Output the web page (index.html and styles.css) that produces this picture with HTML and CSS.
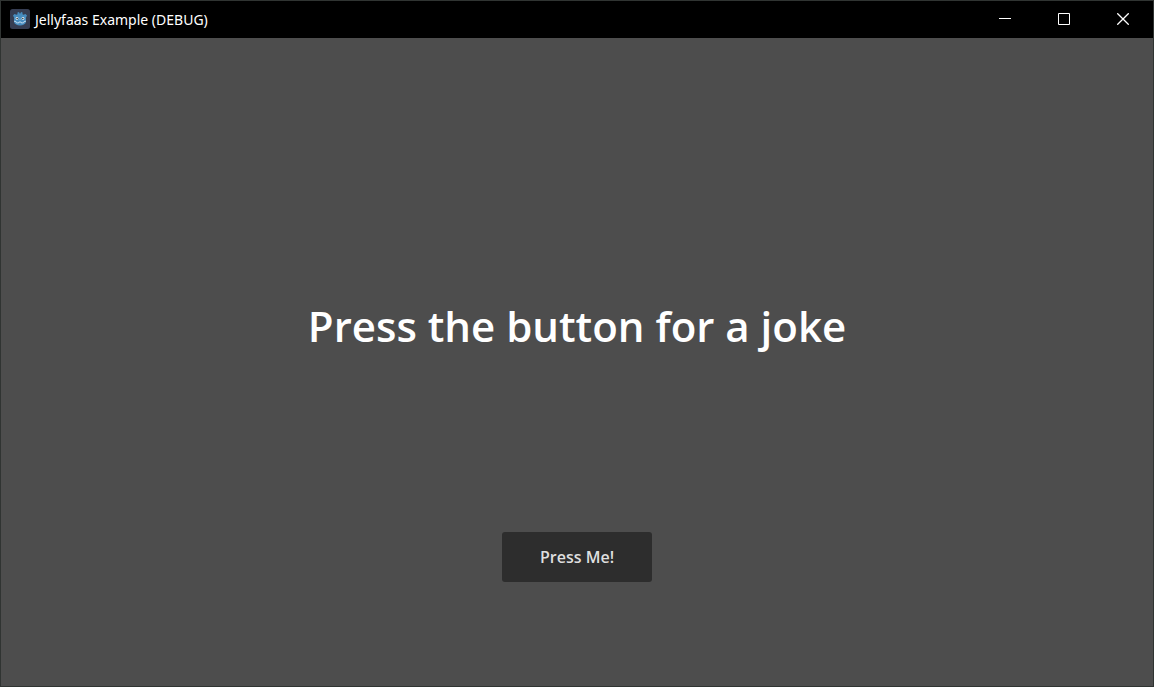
FILE: index.html
```html
<!DOCTYPE html>
<html lang="en">
<head>
<meta charset="utf-8">
<meta name="viewport" content="width=device-width, initial-scale=1">
<title>Jellyfaas Example (DEBUG)</title>
<link rel="stylesheet" href="styles.css">
</head>
<body>
<div class="window">
  <header class="titlebar">
    <svg class="app-icon" viewBox="0 0 20 20" aria-hidden="true">
      <rect width="20" height="20" rx="2.500" fill="#363d52"/>
      <path d="M3 6.500L4.500 5l2 .7 1-.5V3.500L9 3l.6 1.500h.8L11 3l1.500.5v1.700l1 .5 2-.7L17 6.500 16 8.500V13c-.5 2.300-3 3.500-6 3.500S4.500 15.300 4 13V8.500z" fill="#478cbf"/>
      <path d="M4 12.200l2 .3.400 1.300 2.200.2.300-1h2.200l.3 1 2.200-.2.400-1.300 2-.3" fill="none" stroke="#c9dff0" stroke-width=".9"/>
      <circle cx="7" cy="9.500" r="1.400" fill="#dce9f3"/><circle cx="13" cy="9.500" r="1.400" fill="#dce9f3"/>
      <circle cx="7.200" cy="9.500" r=".8" fill="#414042"/><circle cx="12.800" cy="9.500" r=".8" fill="#414042"/>
      <path d="M10 9.500v1.500" stroke="#a9cbe4" stroke-width=".7"/>
    </svg>
    <span class="title">Jellyfaas Example (DEBUG)</span>
    <div class="controls">
      <button class="control" aria-label="Minimize"><svg viewBox="0 0 12 12"><path d="M0 5.500h12"/></svg></button>
      <button class="control" aria-label="Maximize"><svg viewBox="0 0 12 12"><path d="M.5.5h11v11H.5z"/></svg></button>
      <button class="control" aria-label="Close"><svg viewBox="0 0 12 12"><path class="cross" d="M.3.3l11.400 11.400M11.700.3L.3 11.700"/></svg></button>
    </div>
  </header>
  <main class="content">
    <h1 class="message">Press the button for a joke</h1>
    <button class="press">Press Me!</button>
  </main>
</div>
</body>
</html>
```
FILE: styles.css
```css
* { box-sizing: border-box; }
body { margin: 0; }
.window {
  display: flex;
  flex-direction: column;
  min-height: 100vh;
  border: 1px solid #303432;
  background: #4d4d4d;
  font-family: "Open Sans", "Noto Sans", sans-serif;
}
.titlebar {
  display: flex;
  align-items: center;
  height: 37px;
  padding: 0 1px 1px 9px;
  gap: 5px;
  background: #000;
  color: #fff;
}
.app-icon { width: 20px; height: 20px; }
.title {
  padding-top: 2px;
  font-family: "Noto Sans", sans-serif;
  font-size: 14px;
  line-height: 20px;
}
.controls { display: flex; gap: 1px; margin-left: auto; }
.control {
  display: grid;
  place-items: center;
  width: 58px;
  height: 36px;
  padding: 0;
  border: 0;
  background: none;
}
.control svg { width: 12px; height: 12px; fill: none; stroke: #fff; }
.cross { stroke-width: 1.3; }
.content {
  flex: 1;
  display: grid;
  grid-template-rows: 1fr auto 1fr;
  justify-items: center;
}
.message {
  grid-row: 2;
  margin: 0;
  padding-bottom: 72px;
  font-size: 42px;
  line-height: 60px;
  font-weight: 600;
  color: #fff;
  text-align: center;
}
.press {
  grid-row: 3;
  align-self: center;
  width: 150px;
  height: 50px;
  border: 0;
  border-radius: 3px;
  background: #2d2d2d;
  color: #dfdfdf;
  font: 600 16px/24px "Open Sans", "Noto Sans", sans-serif;
}
```
